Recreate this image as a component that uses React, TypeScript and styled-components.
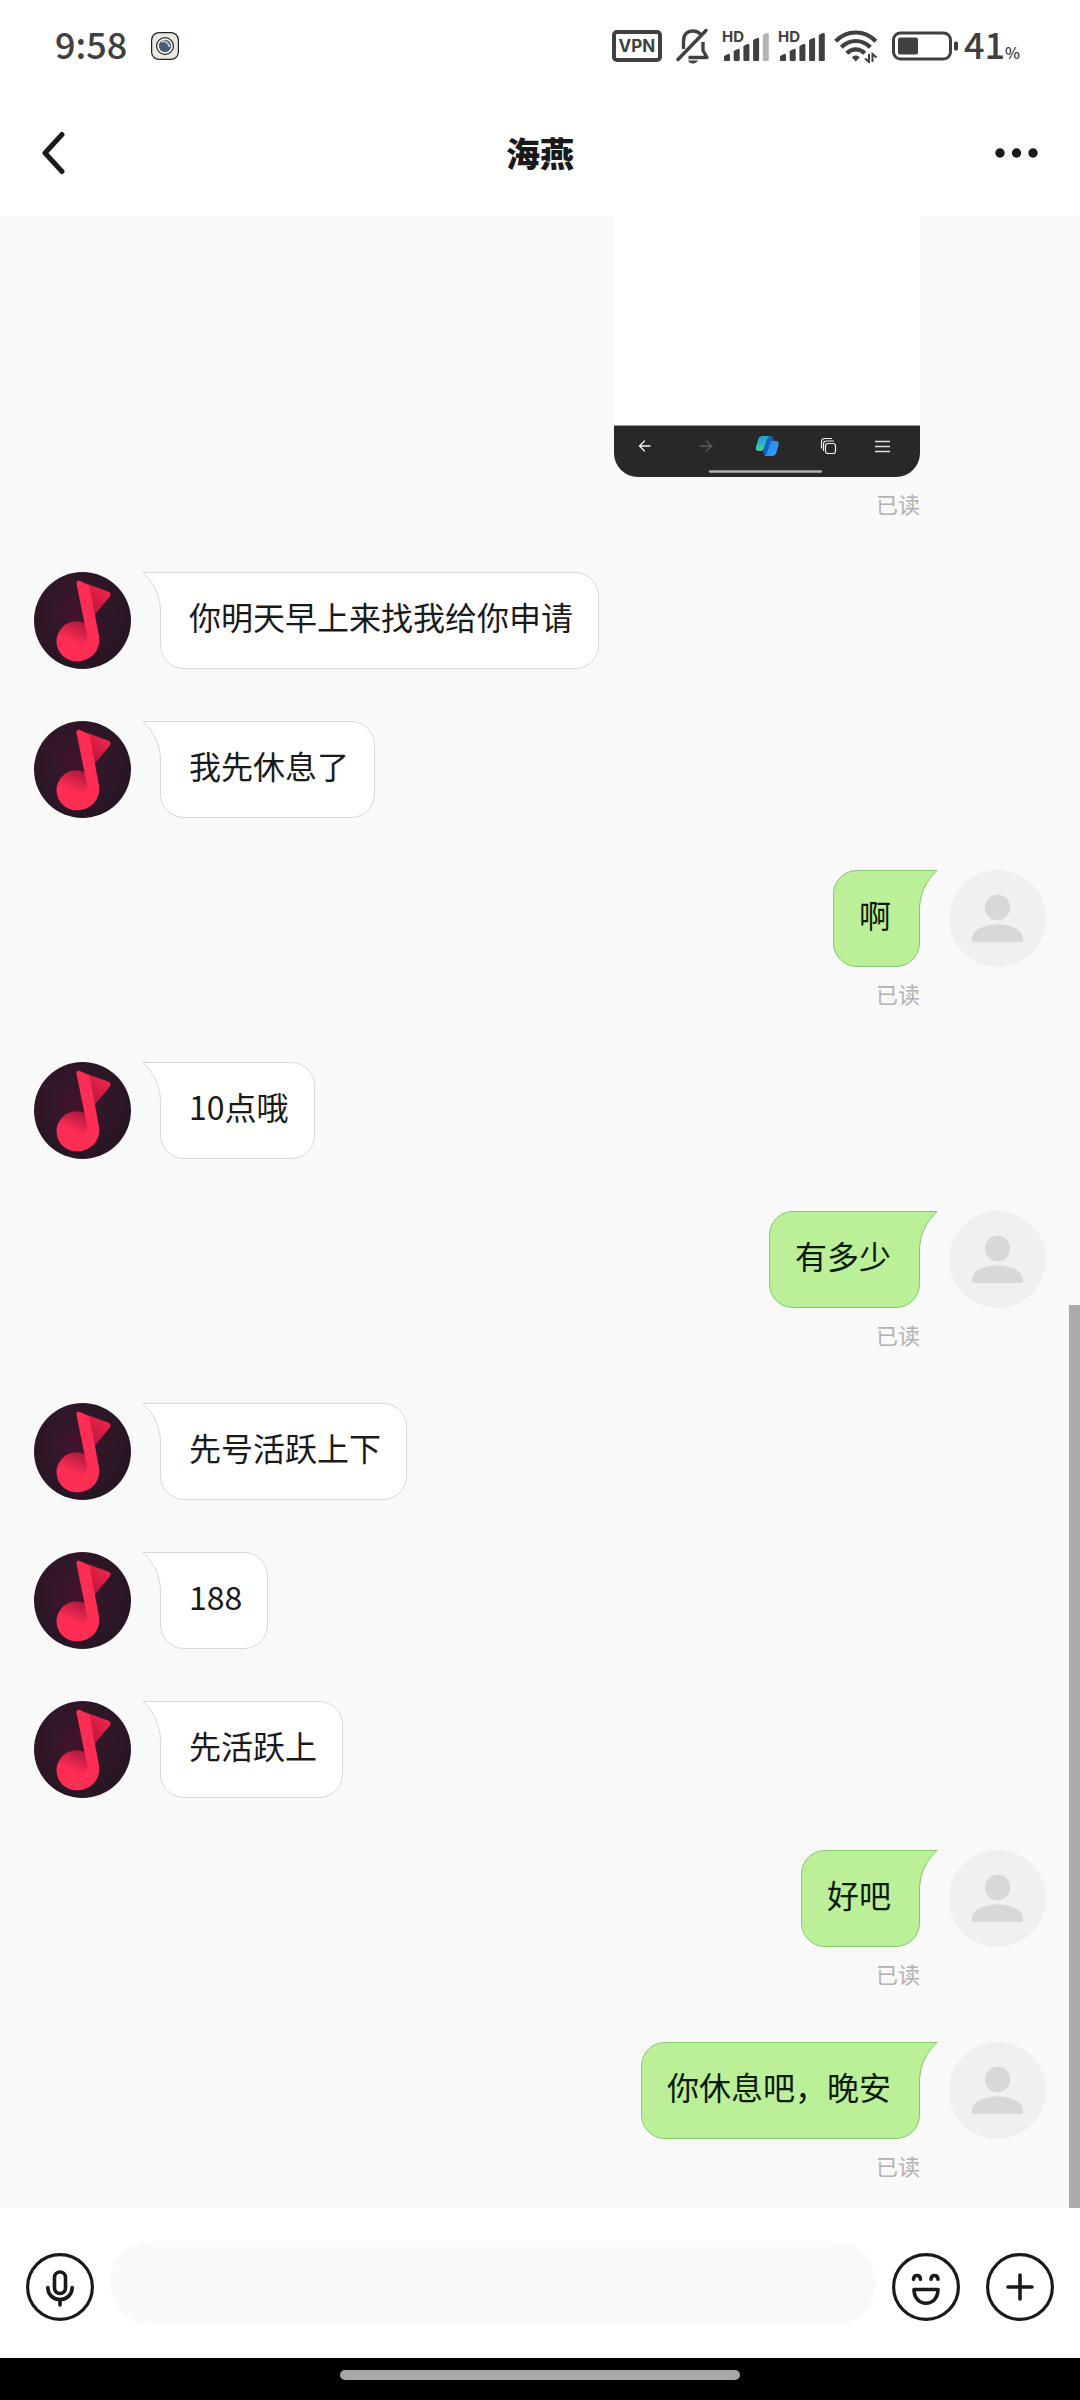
import React from "react";
import styled, { createGlobalStyle, css } from "styled-components";

const INK = "#1a1a1a";
const STATUS = "#404040";

const GlobalStyle = createGlobalStyle`
  * { box-sizing: border-box; }
  body {
    margin: 0;
    background: #fff;
    color: ${INK};
    font-family: "Noto Sans CJK SC", "Noto Sans", sans-serif;
  }
  button { padding: 0; border: 0; background: none; color: inherit; cursor: pointer; }
  svg { display: block; }
`;

const Page = styled.div`
  display: flex;
  flex-direction: column;
  min-height: 100vh;
`;

const StatusBar = styled.div`
  display: flex;
  align-items: center;
  justify-content: space-between;
  height: 92px;
  padding: 0 60px 0 55px;
  color: ${STATUS};
`;

const StatusGroup = styled.div<{ $gap: number }>`
  display: flex;
  align-items: center;
  gap: ${(p) => p.$gap}px;
`;

const StatusText = styled.span`
  display: flex;
  align-items: baseline;
  padding-bottom: 6px;
  font: 500 36px/40px "Noto Sans CJK SC", sans-serif;
`;

const PercentSign = styled.small`
  font-size: 16px;
  line-height: 20px;
`;

const VpnBadge = styled.span`
  width: 50px;
  height: 32px;
  border: 4px solid ${STATUS};
  border-radius: 5px;
  font: 700 17px/24px Inter, sans-serif;
  text-align: center;
`;

const Header = styled.header`
  display: grid;
  grid-template-columns: 1fr auto 1fr;
  align-items: center;
  height: 124px;
  padding: 0 40px 2px;
`;

const Title = styled.h1`
  margin: 0;
  font-size: 34px;
  line-height: 48px;
  font-weight: 900;
`;

const IconButton = styled.button<{ $end?: boolean }>`
  justify-self: ${(p) => (p.$end ? "end" : "start")};
`;

const Chat = styled.main`
  position: relative;
  flex: 1;
  display: flex;
  flex-direction: column;
  gap: 52px;
  padding: 0 34px 26px;
  background: #f9f9f9;
`;

const ScrollThumb = styled.div`
  position: absolute;
  right: 0;
  bottom: 0;
  width: 11px;
  height: 903px;
  background: #ababab;
`;

const Row = styled.div<{ $mine?: boolean }>`
  display: flex;
  flex-direction: ${(p) => (p.$mine ? "row-reverse" : "row")};
  align-items: flex-start;
  gap: 29px;
`;

const AvatarBox = styled.div`
  flex: none;
  width: 97px;
  height: 97px;
`;

const AvatarSpace = styled.div`
  flex: none;
  width: 97px;
`;

const Stack = styled.div`
  display: flex;
  flex-direction: column;
  align-items: flex-end;
`;

const Bubble = styled.div<{ $mine?: boolean }>`
  position: relative;
  min-height: 97px;
  padding: 20px 25px 28px 28px;
  border: 1px solid #d8d8d8;
  border-radius: 24px;
  background: #fff;
  font-size: 32px;
  line-height: 47px;
  ${(p) =>
    p.$mine &&
    css`
      padding: 20px 28px 28px 25px;
      border-color: #85c870;
      background: #bbf098;
      color: #0c1a06;
    `}
`;

const TailSvg = styled.svg<{ $mine?: boolean }>`
  position: absolute;
  top: -1px;
  ${(p) => (p.$mine ? "right: -19px; transform: scaleX(-1);" : "left: -19px;")}
`;

const ReadMark = styled.span`
  padding: 11px 0 2px;
  font-size: 22px;
  line-height: 30px;
  color: #b2b2b2;
`;

const Shot = styled.div`
  width: 306px;
  overflow: hidden;
  border-radius: 0 0 24px 24px;
  background: #fff;
`;

const ShotPage = styled.div`
  height: 209px;
`;

const ShotBar = styled.div`
  height: 52px;
  border-top: 1px solid #9a9a9a;
  background: #282828;
`;

const Composer = styled.form`
  display: flex;
  align-items: flex-end;
  gap: 16px;
  padding: 33px 26px;
`;

const RoundButton = styled.button`
  flex: none;
  margin-bottom: 4px;
`;

const Actions = styled.div`
  display: flex;
  gap: 26px;
`;

const Field = styled.input`
  flex: 1;
  min-width: 0;
  height: 84px;
  padding: 0 36px;
  border: 0;
  border-radius: 42px;
  outline: none;
  background: #f9f9f9;
  font: 32px/48px "Noto Sans CJK SC", sans-serif;
`;

const NavBar = styled.div`
  display: flex;
  justify-content: center;
  height: 42px;
  padding-top: 12px;
  background: #000;
`;

const NavHandle = styled.div`
  width: 37%;
  height: 10px;
  border-radius: 5px;
  background: #a8a8a8;
`;

function AppGlyph() {
  return (
    <svg width="28" height="28" viewBox="0 0 28 28" aria-hidden="true">
      <rect x=".6" y=".6" width="26.8" height="26.8" rx="7.5" fill="#e9e9df" stroke="#222" strokeWidth="1.2" />
      <circle cx="14" cy="14" r="8.4" fill="#fff" stroke="#222" strokeWidth="1.2" />
      <circle cx="14" cy="14" r="6.2" fill="#4a5f72" />
      <path d="M10 9.5c4-.8 7.500 1.500 8.500 5.500" fill="none" stroke="#b9cad8" strokeWidth="2" />
    </svg>
  );
}

function MutedBell() {
  return (
    <svg width="34" height="36" viewBox="0 0 34 36" fill="none" stroke={STATUS} strokeWidth="3.4" aria-hidden="true">
      <path d="M7.500 21v-8C7.500 6.500 11.500 3 17 3c3.200 0 5.800 1.200 7.500 3.300" />
      <path d="M12.500 29.500H31L27 22.500V14" strokeLinejoin="round" />
      <path d="M2 31.500 30 2.500" strokeLinecap="round" />
      <path d="M12 32.500h10c-1 2-2.800 3-5 3s-4-1-5-3z" fill={STATUS} stroke="none" />
    </svg>
  );
}

function Signal({ bars }: { bars: number }) {
  return (
    <svg width="48" height="44" viewBox="0 -6 48 44" fill={STATUS} aria-hidden="true">
      <text x="0" y="12" fontFamily="Inter, sans-serif" fontWeight="700" fontSize="15">HD</text>
      {[7, 12, 17, 23, 28].map((h, i) => (
        <path
          key={h}
          d={`M${2 + i * 9.700} ${31 - h + 2}l4-2q2-.8 2 1.500v${h - 2.500}q0 1-1 1h-4q-1 0-1-1z`}
          opacity={i < bars ? 1 : 0.4}
        />
      ))}
    </svg>
  );
}

function Wifi() {
  return (
    <svg width="44" height="34" viewBox="0 0 44 34" fill="none" stroke={STATUS} strokeWidth="4.200" aria-hidden="true">
      <path d="M1.700 12.200C13 .6 30.500.6 41.800 12.200" />
      <path d="M7.300 18.300c8.300-8.400 20.700-8.400 29 0" />
      <path d="M12.800 24.200c5.300-5.200 12.700-5.200 18 0" />
      <path d="M17.800 28.200c2.400-2.400 5.600-2.400 8 0L21.800 32.500z" fill={STATUS} stroke="none" />
      <path d="M35 25v8l-4-3.500M38.500 33v-8l4 3.500" strokeWidth="2" />
    </svg>
  );
}

function Battery() {
  return (
    <svg width="66" height="30" viewBox="0 0 66 30" aria-hidden="true">
      <rect x="1.500" y="2" width="57" height="26" rx="7" fill="none" stroke={STATUS} strokeWidth="3" />
      <rect x="6" y="6.500" width="20" height="17" rx="2" fill={STATUS} />
      <rect x="62" y="10.500" width="4" height="9" rx="1.500" fill={STATUS} />
    </svg>
  );
}

function MusicAvatar({ id }: { id: string }) {
  return (
    <svg width="97" height="97" viewBox="0 0 97 97" role="img" aria-label="海燕">
      <defs>
        <radialGradient id={`${id}-bg`} cx=".42" cy=".42" r=".58">
          <stop offset="0" stopColor="#45122c" />
          <stop offset=".4" stopColor="#33172a" />
          <stop offset="1" stopColor="#271624" />
        </radialGradient>
        <linearGradient id={`${id}-flag`} x1=".8" y1="0" x2=".1" y2=".9">
          <stop offset="0" stopColor="#fa2a50" />
          <stop offset=".4" stopColor="#d91d44" />
          <stop offset="1" stopColor="#a3143a" />
        </linearGradient>
        <linearGradient id={`${id}-head`} x1=".75" y1="0" x2=".5" y2=".55">
          <stop offset="0" stopColor="#a5163a" />
          <stop offset="1" stopColor="#fe2d54" />
        </linearGradient>
      </defs>
      <circle cx="48.500" cy="48.500" r="48.500" fill={`url(#${id}-bg)`} />
      <path d="M45 9 74 19.500c2.500 1 3.300 2.800 2 4.700L58 46z" fill={`url(#${id}-flag)`} />
      <circle cx="42.500" cy="69.300" r="20" fill={`url(#${id}-head)`} />
      <path d="M42.500 12c-.5-2.500 1-3.800 3.500-3l9.500 5L65 64.500C67 78.500 57 89.300 42.500 89.300L43 80 53.500 66z" fill="#fe2d54" />
    </svg>
  );
}

function PersonAvatar() {
  return (
    <svg width="97" height="97" viewBox="0 0 97 97" role="img" aria-label="我">
      <circle cx="48.500" cy="48.500" r="48.500" fill="#f0f0f0" />
      <circle cx="48.500" cy="37.500" r="12.700" fill="#d8d8d8" />
      <path d="M23 70.500v-2C23 60 35 54.500 48.500 54.500S74 60 74 68.500v2q0 1.500-1.500 1.500h-48q-1.500 0-1.500-1.500z" fill="#d8d8d8" />
    </svg>
  );
}

function Tail({ mine }: { mine?: boolean }) {
  return (
    <TailSvg $mine={mine} width="46" height="74" viewBox="0 0 46 74" aria-hidden="true">
      <path d="M1 .5H46V26L30 72H18.500V40C18.500 24 12 11 1 .5z" fill={mine ? "#bbf098" : "#fff"} />
      <path d="M46 .5H1C12 11 18.500 24 18.500 40V72" fill="none" stroke={mine ? "#85c870" : "#d8d8d8"} />
    </TailSvg>
  );
}

function BrowserTools() {
  return (
    <svg width="306" height="51" viewBox="0 0 306 51" fill="none" strokeLinecap="round" strokeLinejoin="round" aria-hidden="true">
      <defs>
        <linearGradient id="leaf-a" x1=".3" y1="0" x2=".6" y2="1">
          <stop offset="0" stopColor="#1c9ee0" />
          <stop offset=".5" stopColor="#2bb9c0" />
          <stop offset="1" stopColor="#58d38c" />
        </linearGradient>
        <linearGradient id="leaf-b" x1="0" y1="0" x2="1" y2="1">
          <stop offset="0" stopColor="#2c7be8" />
          <stop offset="1" stopColor="#2fa8f5" />
        </linearGradient>
      </defs>
      <path d="M36 20H26M30.500 15 25.500 20l5 5" stroke="#f4f4f4" strokeWidth="1.300" />
      <path d="M86 20h12M92.500 15l5 5-5 5" stroke="#5c5c5c" strokeWidth="1.300" />
      <path d="M150 10h6q2.500 0 3 2l1 3-6 15q-3 0-4-2l-1.500-3z" fill="#1560c4" />
      <path d="M148 10h8q-2 0-3 3l-3.500 10q-.8 2-3 2h-2q-3.500 0-2.500-4l2-7q1-4 4-4z" fill="url(#leaf-a)" />
      <path d="M158 15h4q3.500 0 2.500 4l-2 7q-1 4-4.500 4h-8q2 0 3-3l3-10q.6-2 2-2z" fill="url(#leaf-b)" />
      <g stroke="#eee" strokeWidth="1.200">
        <rect x="211.500" y="17.500" width="10" height="10" rx="2.500" />
        <path d="M209.500 24.500V18q0-3 3-3h7M207.500 22v-6q0-3.500 3.500-3.500h6.500" />
      </g>
      <path d="M261 15.500h15M261 20.500h15M261 25.500h15" strokeLinecap="butt" stroke="#ddd" strokeWidth="1.300" />
      <path d="M96 45.500h111" stroke="#b0b0b0" strokeWidth="2.400" />
    </svg>
  );
}

function RoundIcon({ children }: { children: React.ReactNode }) {
  return (
    <svg width="68" height="68" viewBox="0 0 68 68" fill="none" stroke={INK} strokeWidth="3.600" strokeLinecap="round" strokeLinejoin="round" aria-hidden="true">
      <circle cx="34" cy="34" r="32.400" strokeWidth="3.200" />
      {children}
    </svg>
  );
}

interface Message {
  text: string;
  mine?: boolean;
}

const messages: Message[] = [
  { text: "你明天早上来找我给你申请" },
  { text: "我先休息了" },
  { text: "啊", mine: true },
  { text: "10点哦" },
  { text: "有多少", mine: true },
  { text: "先号活跃上下" },
  { text: "188" },
  { text: "先活跃上" },
  { text: "好吧", mine: true },
  { text: "你休息吧，晚安", mine: true },
];

export default function App() {
  return (
    <Page>
      <GlobalStyle />
      <StatusBar>
        <StatusGroup $gap={24}>
          <StatusText>9:58</StatusText>
          <AppGlyph />
        </StatusGroup>
        <StatusGroup $gap={6}>
          <StatusGroup $gap={8}>
            <StatusGroup $gap={12}>
              <StatusGroup $gap={14}>
                <VpnBadge>VPN</VpnBadge>
                <MutedBell />
              </StatusGroup>
              <Signal bars={4} />
            </StatusGroup>
            <Signal bars={5} />
            <StatusGroup $gap={14}>
              <Wifi />
              <Battery />
            </StatusGroup>
          </StatusGroup>
          <StatusText>
            41<PercentSign>%</PercentSign>
          </StatusText>
        </StatusGroup>
      </StatusBar>

      <Header>
        <IconButton type="button" aria-label="返回">
          <svg width="26" height="44" viewBox="0 0 26 44" fill="none" stroke={INK} strokeWidth="5" strokeLinecap="round" strokeLinejoin="round">
            <path d="M22 3.500 5 22l17 18.500" />
          </svg>
        </IconButton>
        <Title>海燕</Title>
        <IconButton type="button" aria-label="更多" $end>
          <svg width="46" height="12" viewBox="0 0 46 12" fill={INK}>
            <circle cx="6" cy="6" r="4.700" />
            <circle cx="22.500" cy="6" r="4.700" />
            <circle cx="39" cy="6" r="4.700" />
          </svg>
        </IconButton>
      </Header>

      <Chat>
        <Row $mine>
          <AvatarSpace />
          <Stack>
            <Shot>
              <ShotPage />
              <ShotBar>
                <BrowserTools />
              </ShotBar>
            </Shot>
            <ReadMark>已读</ReadMark>
          </Stack>
        </Row>
        {messages.map((m, i) => (
          <Row key={i} $mine={m.mine}>
            <AvatarBox>{m.mine ? <PersonAvatar /> : <MusicAvatar id={`note-${i}`} />}</AvatarBox>
            <Stack>
              <Bubble $mine={m.mine}>
                <Tail mine={m.mine} />
                {m.text}
              </Bubble>
              {m.mine && <ReadMark>已读</ReadMark>}
            </Stack>
          </Row>
        ))}
        <ScrollThumb />
      </Chat>

      <Composer onSubmit={(e) => e.preventDefault()}>
        <RoundButton type="button" aria-label="语音">
          <RoundIcon>
            <rect x="28.500" y="19" width="11" height="21.500" rx="5.500" />
            <path d="M21.800 34.500c0 7 5.200 12 12.200 12s12.200-5 12.200-12M34 46.500v5.500" />
          </RoundIcon>
        </RoundButton>
        <Field type="text" aria-label="输入消息" />
        <Actions>
          <RoundButton type="button" aria-label="表情">
            <RoundIcon>
              <path d="M21.500 26.200c.5-5 6.500-5 7 0M39 26.200c.5-5 6.500-5 7 0M22 36.500h24c0 8-5 13.700-12 13.700S22 44.500 22 36.500z" />
            </RoundIcon>
          </RoundButton>
          <RoundButton type="button" aria-label="添加">
            <RoundIcon>
              <path d="M34 22v24M22 34h24" />
            </RoundIcon>
          </RoundButton>
        </Actions>
      </Composer>

      <NavBar>
        <NavHandle />
      </NavBar>
    </Page>
  );
}
